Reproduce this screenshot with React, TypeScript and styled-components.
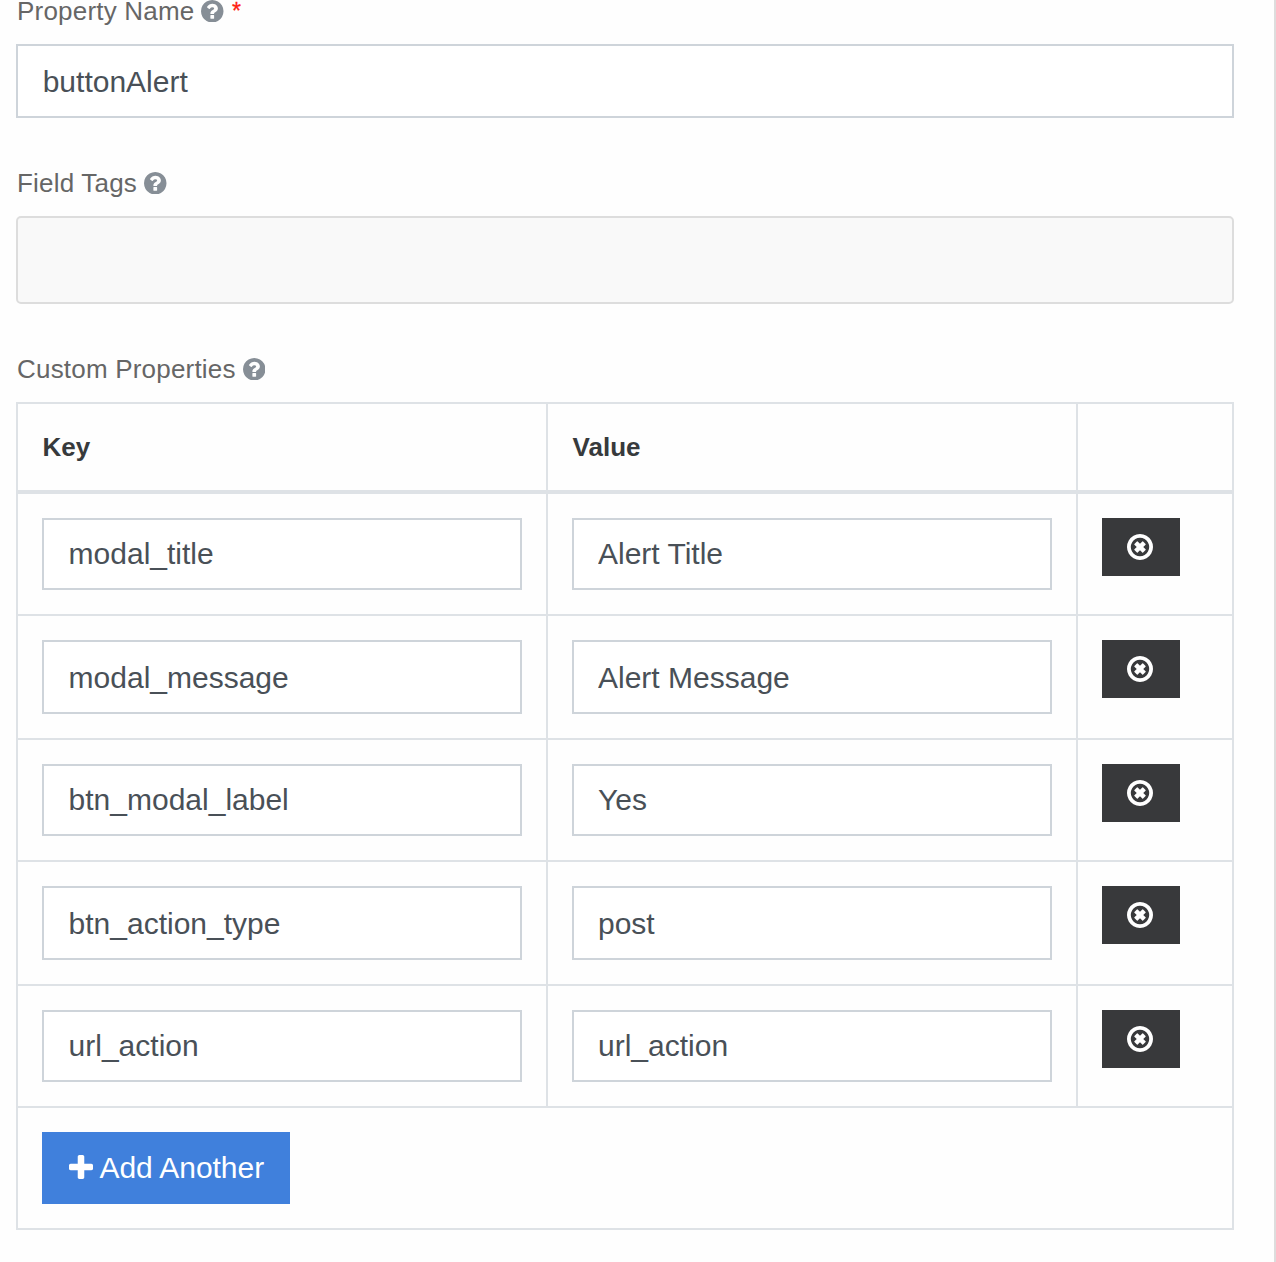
import React from 'react';
import styled, { createGlobalStyle } from 'styled-components';

const GlobalStyle = createGlobalStyle`
  *, *::before, *::after { box-sizing: border-box; }
  body {
    margin: 0;
    background: #fefefe;
    font-family: "Liberation Sans", Arial, Helvetica, sans-serif;
    overflow: hidden;
  }
`;

const Panel = styled.main`
  width: 1276px;
  height: 1262px;
  padding: 0 40px 0 16px;
  border-right: 2px solid #dddddd;
  overflow: hidden;
`;

const Field = styled.section<{ $gap: number }>`
  display: flex;
  flex-direction: column;
  margin-bottom: ${(p) => p.$gap}px;
`;

const Label = styled.label<{ $height: number; $tracking: number }>`
  display: flex;
  align-items: flex-end;
  height: ${(p) => p.$height}px;
  padding: 0 0 20px 1px;
  font-size: 26px;
  line-height: 26px;
  letter-spacing: ${(p) => p.$tracking}px;
  color: #666666;
  white-space: nowrap;
`;

const HelpIcon = styled.svg`
  width: 22.5px;
  height: 22.5px;
  margin: 0 0 2px 7px;
  fill: #868e96;
  flex: none;
`;

const Required = styled.span`
  margin-left: 8px;
  font-size: 23px;
  line-height: 26px;
  color: #ff2010;
  -webkit-text-stroke: 0.3px #ff2010;
`;

const TextInput = styled.input<{ $tall?: boolean; $indent?: number }>`
  display: block;
  width: 100%;
  height: ${(p) => (p.$tall ? 74 : 72)}px;
  margin: 0;
  padding: ${(p) => (p.$tall ? 2 : 0)}px 24px 0 ${(p) => p.$indent ?? 24}px;
  border: 2px solid #ced4da;
  border-radius: 0;
  background: #ffffff;
  color: #495057;
  font-family: inherit;
  font-size: 30px;
  outline: none;
`;

const TagsBox = styled.div`
  height: 88px;
  border: 2px solid #dddddd;
  border-radius: 5px;
  background: #f9f9f9;
`;

const Table = styled.div`
  border: 2px solid #dee2e6;
`;

const Row = styled.div`
  display: grid;
  grid-template-columns: 530px 530px 1fr;
  border-bottom: 2px solid #dee2e6;
`;

const HeaderRow = styled(Row)`
  height: 90px;
  border-bottom-width: 4px;
`;

const Cell = styled.div`
  padding: 24px;
  &:not(:last-child) { border-right: 2px solid #dee2e6; }
`;

const HeaderCell = styled(Cell)`
  padding: 27px 24.6px;
  font-size: 26px;
  font-weight: 700;
  line-height: 32px;
  color: #373a3c;
`;

const Footer = styled.div`
  padding: 24px;
`;

const RemoveButton = styled.button`
  display: flex;
  align-items: center;
  justify-content: center;
  width: 78px;
  height: 58px;
  padding: 0 2px 0 0;
  border: 0;
  background: #38393b;
  svg { width: 26px; height: 26px; fill: #ffffff; }
`;

const AddButton = styled.button`
  display: flex;
  align-items: center;
  width: 248px;
  height: 72px;
  padding: 0 0 0 26.5px;
  border: 0;
  background: #4080dc;
  color: #ffffff;
  font-family: inherit;
  font-size: 30px;
  line-height: 34px;
  letter-spacing: -0.05px;
  white-space: nowrap;
  svg { width: 24px; height: 24px; margin: 0 7px 3px 0; fill: #ffffff; flex: none; }
`;

const Help = () => (
  <HelpIcon viewBox="128 128 1536 1536" aria-hidden="true">
    <path d="M1024 1376v-192q0-14-9-23t-23-9h-192q-14 0-23 9t-9 23v192q0 14 9 23t23 9h192q14 0 23-9t9-23zm256-672q0-88-55.5-163t-138.5-116-170-41q-243 0-371 213-15 24 8 42l132 100q7 6 19 6 16 0 25-12 53-68 86-92 34-24 86-24 48 0 85.5 26t37.5 59q0 38-20 61t-68 45q-63 28-115.5 86.5t-52.5 125.5v36q0 14 9 23t23 9h192q14 0 23-9t9-23q0-19 21.5-49.5t54.5-49.5q32-18 49-28.5t46-35 44.5-48 28-60.5 12.5-81zm384 192q0 209-103 385.5t-279.5 279.5-385.5 103-385.5-103-279.5-279.5-103-385.5 103-385.5 279.5-279.5 385.5-103 385.5 103 279.5 279.5 103 385.5z" />
  </HelpIcon>
);

const CircledTimes = () => (
  <svg viewBox="0 128 1536 1536" aria-hidden="true">
    <path d="M1097 1079l-146 146q-10 10-23 10t-23-10l-137-137-137 137q-10 10-23 10t-23-10l-146-146q-10-10-10-23t10-23l137-137-137-137q-10-10-10-23t10-23l146-146q10-10 23-10t23 10l137 137 137-137q10-10 23-10t23 10l146 146q10 10 10 23t-10 23l-137 137 137 137q10 10 10 23t-10 23zm215-183q0-148-73-273t-198-198-273-73-273 73-198 198-73 273 73 273 198 198 273 73 273-73 198-198 73-273zm224 0q0 209-103 385.5t-279.5 279.5-385.5 103-385.5-103-279.5-279.5-103-385.5 103-385.5 279.5-279.5 385.5-103 385.5 103 279.5 279.5 103 385.5z" />
  </svg>
);

const Plus = () => (
  <svg viewBox="192 128 1408 1408" aria-hidden="true">
    <path d="M1600 736v192q0 40-28 68t-68 28h-416v416q0 40-28 68t-68 28h-192q-40 0-68-28t-28-68v-416h-416q-40 0-68-28t-28-68v-192q0-40 28-68t68-28h416v-416q0-40 28-68t68-28h192q40 0 68 28t28 68v416h416q40 0 68 28t28 68z" />
  </svg>
);

const properties = [
  { key: 'modal_title', value: 'Alert Title' },
  { key: 'modal_message', value: 'Alert Message' },
  { key: 'btn_modal_label', value: 'Yes' },
  { key: 'btn_action_type', value: 'post' },
  { key: 'url_action', value: 'url_action' },
];

export default function App() {
  return (
    <>
      <GlobalStyle />
      <Panel>
        <Field $gap={48}>
          <Label $height={44} $tracking={0.2}>
            Property Name
            <Help />
            <Required>*</Required>
          </Label>
          <TextInput $tall $indent={24.7} defaultValue="buttonAlert" spellCheck={false} />
        </Field>
        <Field $gap={48}>
          <Label $height={50} $tracking={0.2}>
            Field Tags
            <Help />
          </Label>
          <TagsBox />
        </Field>
        <Field $gap={0}>
          <Label $height={50} $tracking={0.2}>
            Custom Properties
            <Help />
          </Label>
          <Table>
            <HeaderRow>
              <HeaderCell>Key</HeaderCell>
              <HeaderCell>Value</HeaderCell>
              <HeaderCell />
            </HeaderRow>
            {properties.map((item, i) => (
              <Row key={item.key}>
                <Cell>
                  <TextInput $tall={i % 2 === 1} $indent={24.6} defaultValue={item.key} spellCheck={false} />
                </Cell>
                <Cell>
                  <TextInput $tall={i % 2 === 1} defaultValue={item.value} spellCheck={false} />
                </Cell>
                <Cell>
                  <RemoveButton type="button" aria-label="Remove">
                    <CircledTimes />
                  </RemoveButton>
                </Cell>
              </Row>
            ))}
            <Footer>
              <AddButton type="button">
                <Plus />
                Add Another
              </AddButton>
            </Footer>
          </Table>
        </Field>
      </Panel>
    </>
  );
}
